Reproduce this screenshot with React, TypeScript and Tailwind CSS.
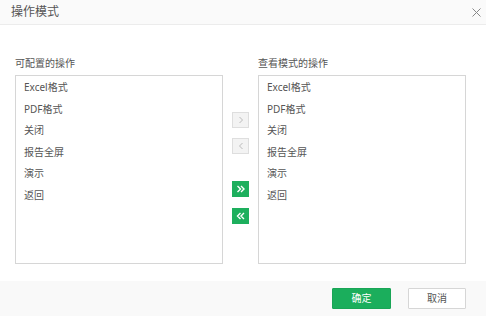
import React from "react";

const items = ["Excel格式", "PDF格式", "关闭", "报告全屏", "演示", "返回"];

function ListBox({ label, data }: { label: string; data: string[] }) {
  return (
    <div className="flex flex-col w-[208px]">
      <div className="h-[16px] leading-[16px] text-[10px] text-[#555] mb-[4px]">{label}</div>
      <div className="h-[189px] border border-[#d6d6d6] bg-white pt-[1px]">
        {data.map((t) => (
          <div key={t} className="h-[21.5px] leading-[21.5px] pl-[8px] text-[10px] text-[#555]">
            {t}
          </div>
        ))}
      </div>
    </div>
  );
}

function Chevron({ dir, color }: { dir: "r" | "l"; color: string }) {
  return (
    <svg width="6" height="8" viewBox="0 0 6 8">
      <path
        d={dir === "r" ? "M1.5 1 L4.5 4 L1.5 7" : "M4.5 1 L1.5 4 L4.5 7"}
        stroke={color}
        strokeWidth="1"
        fill="none"
      />
    </svg>
  );
}

function Double({ dir }: { dir: "r" | "l" }) {
  return (
    <svg width="10" height="8" viewBox="0 0 10 8">
      <path
        d={
          dir === "r"
            ? "M1.5 1 L4.5 4 L1.5 7 M5 1 L8 4 L5 7"
            : "M4.5 1 L1.5 4 L4.5 7 M8 1 L5 4 L8 7"
        }
        stroke="#fff"
        strokeWidth="1.4"
        fill="none"
      />
    </svg>
  );
}

export default function App() {
  return (
    <div
      className="w-[486px] h-[316px] bg-white flex flex-col overflow-hidden"
      style={{ fontFamily: '"Noto Sans", "Noto Sans CJK SC", sans-serif' }}
    >
      <div className="h-[25px] shrink-0 bg-[#fafafa] border-b border-[#ececec] flex items-center justify-between pl-[11px] pr-[5px]">
        <span className="text-[12px] text-[#555]">操作模式</span>
        <svg width="9" height="9" viewBox="0 0 9 9">
          <path d="M0.5 0.5 L8.5 8.5 M8.5 0.5 L0.5 8.5" stroke="#888" strokeWidth="1" />
        </svg>
      </div>
      <div className="flex-1 flex pl-[15px] pt-[30px]">
        <ListBox label="可配置的操作" data={items} />
        <div className="w-[35px] flex flex-col items-center pt-[57px]">
          <div className="w-[17px] h-[16px] bg-[#f3f3f3] border border-[#dedede] flex items-center justify-center">
            <Chevron dir="r" color="#bbb" />
          </div>
          <div className="w-[17px] h-[16px] mt-[10px] bg-[#f3f3f3] border border-[#dedede] flex items-center justify-center">
            <Chevron dir="l" color="#bbb" />
          </div>
          <div className="w-[17px] h-[16px] mt-[27px] bg-[#1daf5d] flex items-center justify-center">
            <Double dir="r" />
          </div>
          <div className="w-[17px] h-[16px] mt-[11px] bg-[#1daf5d] flex items-center justify-center">
            <Double dir="l" />
          </div>
        </div>
        <ListBox label="查看模式的操作" data={items} />
      </div>
      <div className="h-[35px] shrink-0 bg-[#f9f9f9] flex items-center justify-end pr-[20px] gap-[17px]">
        <div className="w-[59px] h-[21px] bg-[#1bae5c] border border-[#19a556] rounded-[1px] flex items-center justify-center text-[10px] text-white">
          确定
        </div>
        <div className="w-[58px] h-[21px] bg-white border border-[#d6d6d6] rounded-[1px] flex items-center justify-center text-[10px] text-[#555]">
          取消
        </div>
      </div>
    </div>
  );
}
